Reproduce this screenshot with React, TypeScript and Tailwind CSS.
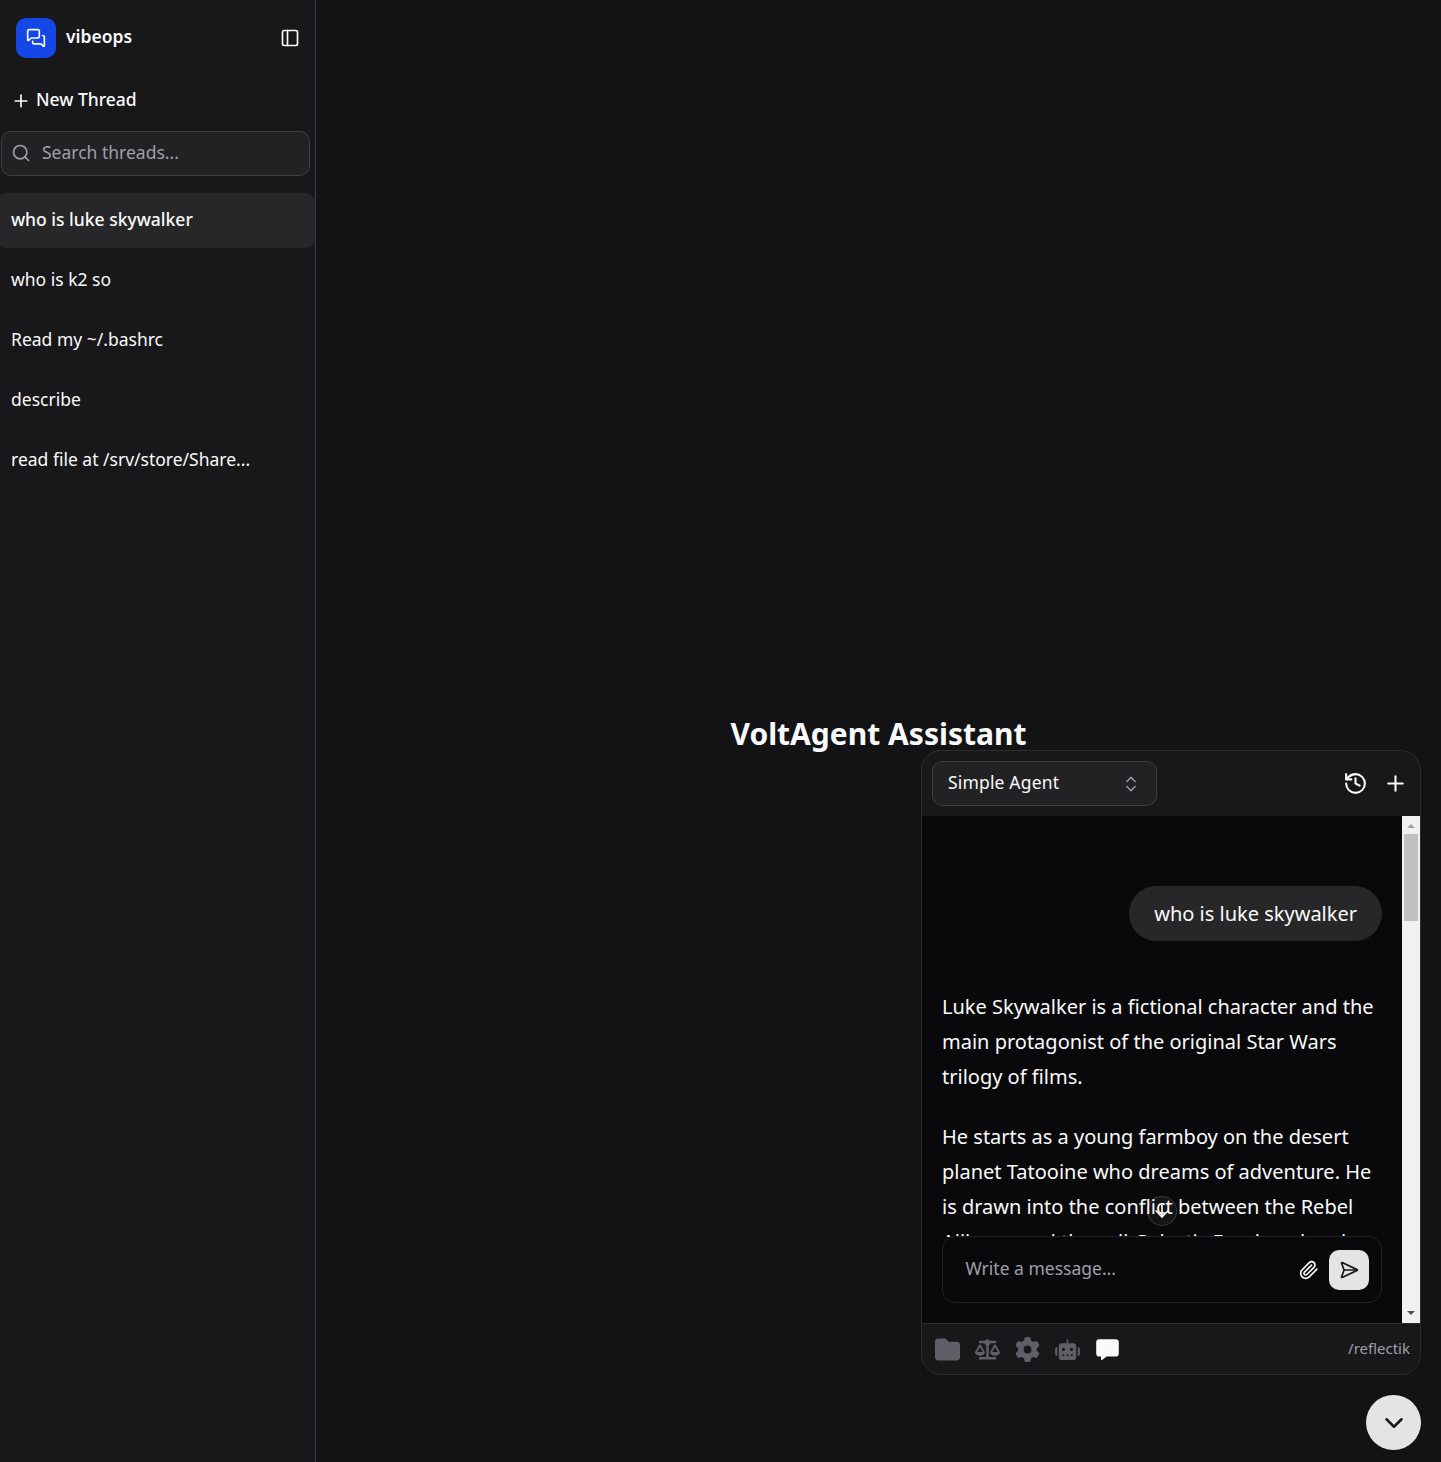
import { MessagesSquare, PanelLeft, Plus, Search, ChevronsUpDown, History, SendHorizontal, ChevronDown, ArrowDown } from 'lucide-react';
import { FaFolder, FaScaleBalanced, FaGear } from 'react-icons/fa6';

const threads = ['who is luke skywalker', 'who is k2 so', 'Read my ~/.bashrc', 'describe', 'read file at /srv/store/Share...'];

function Paperclip() {
  return (
    <svg width="20" height="20" viewBox="0 0 24 24" fill="none" stroke="currentColor" strokeWidth="2" strokeLinecap="round" strokeLinejoin="round">
      <path d="m21.44 11.05-9.19 9.19a6 6 0 0 1-8.49-8.49l8.57-8.57A4 4 0 1 1 18 8.84l-8.59 8.57a2 2 0 0 1-2.83-2.83l8.49-8.48" />
    </svg>
  );
}

function Robot() {
  return (
    <svg width="25" height="25" viewBox="0 0 25 25" fill="currentColor">
      <rect x="11.7" y="2.3" width="1.6" height="6" rx="0.8" />
      <path fillRule="evenodd" d="M6.9 6.2H18.1A3.1 3.1 0 0 1 21.2 9.300V19.9A3.1 3.1 0 0 1 18.1 23H6.9A3.1 3.1 0 0 1 3.8 19.9V9.300A3.1 3.1 0 0 1 6.900 6.2ZM8.500 10.700a1.600 1.600 0 1 0 0 3.200a1.600 1.600 0 1 0 0-3.200ZM16.500 10.700a1.600 1.600 0 1 0 0 3.200a1.600 1.600 0 1 0 0-3.200ZM7.300 17.500V19H9.300V17.500ZM11.500 17.500V19H13.500V17.500ZM15.700 17.500V19H17.700V17.500Z" />
      <path d="M2.3 10V19A2.300 2.300 0 0 1 .1 16.700V12.300A2.300 2.300 0 0 1 2.300 10ZM22.700 10V19A2.300 2.300 0 0 0 24.900 16.700V12.300A2.300 2.300 0 0 0 22.700 10Z" />
    </svg>
  );
}

function ChatBubble() {
  return (
    <svg width="25" height="25" viewBox="0 0 25 25" fill="currentColor" className="text-[#fafafa]">
      <path d="M4.3 2.3H20.7A3.1 3.1 0 0 1 23.8 5.4V16.4A3.1 3.1 0 0 1 20.7 19.5H11.6L7 23.1Q6 23.4 6 22.5V19.5H4.3A3.1 3.1 0 0 1 1.2 16.4V5.4A3.1 3.1 0 0 1 4.3 2.3Z" />
    </svg>
  );
}

function Sidebar() {
  return (
    <aside className="flex h-full w-[316px] shrink-0 flex-col border-r border-[#3f3f43] bg-[#18181b]">
      <header className="flex h-[75px] items-center pr-[15px] pl-4 pt-px">
        <div className="flex size-10 items-center justify-center rounded-[10px] bg-[#1447e6]">
          <MessagesSquare size={20} />
        </div>
        <span className="ml-2.5 -mt-1 text-[17.5px] font-semibold">vibeops</span>
        <PanelLeft size={20} className="ml-auto" />
      </header>
      <button className="flex h-[50px] items-center gap-[5px] pl-[11px] text-[17.5px] font-medium">
        <Plus size={20} className="mt-0.5" />
        <span className="-mt-0.5">New Thread</span>
      </button>
      <div className="mt-[6px] mr-[5px] ml-px flex h-[45px] items-center gap-[11px] rounded-[10px] border border-[#3f3f43] bg-[#222225] pl-[9px] text-[#9f9fa9]">
        <Search size={20} className="-mt-px" />
        <span className="-mt-[3px] text-[17.5px]">Search threads...</span>
      </div>
      <nav className="mt-[17px] flex flex-col gap-[5px]">
        {threads.map((t, i) => (
          <div key={t} className={i === 0 ? '-ml-1 flex h-[55px] items-center rounded-[10px] bg-[#27272a] pb-[2px] pl-[15px] text-[17.5px] font-medium' : 'flex h-[55px] items-center pb-[2px] pl-[11px] text-[17.5px]'}>
            {t}
          </div>
        ))}
      </nav>
    </aside>
  );
}

function ChatPanel() {
  return (
    <section className="absolute top-[750px] left-[921px] flex h-[625px] w-[500px] flex-col overflow-hidden rounded-[20px] border border-[#2c2c2f] bg-[#18181b]">
      <header className="flex h-[65px] shrink-0 items-center px-2.5">
        <div className="flex h-[45px] w-[225px] items-center justify-between rounded-[10px] border border-[#3f3f43] bg-[#222225] pr-[15px] pl-[15px] text-[17.5px]">
          <span className="-mt-[3px] tracking-[0.17px]">Simple Agent</span>
          <ChevronsUpDown size={20} className="text-[#8f8f96]" />
        </div>
        <History size={25} className="ml-auto" />
        <Plus size={25} className="ml-[15px] mr-0.5" />
      </header>
      <div className="flex min-h-0 flex-1 bg-[#09090b]">
        <div className="relative flex min-w-0 flex-1 flex-col">
          <div className="h-[421px] overflow-hidden pl-5 text-[20px] leading-[35px]">
            <div className="mt-[70px] mr-5 flex justify-end">
              <div className="h-[55px] rounded-full bg-[#27272a] px-[25px] pt-[10px]">who is luke skywalker</div>
            </div>
            <p className="mt-[48px] whitespace-nowrap">Luke Skywalker is a fictional character and the<br />main protagonist of the original Star Wars<br />trilogy of films.</p>
            <p className="mt-[25px] whitespace-nowrap">He starts as a young farmboy on the desert<br />planet Tatooine who dreams of adventure. He<br />is drawn into the conflict between the Rebel<br />Alliance and the evil Galactic Empire when he</p>
          </div>
          <div className="absolute top-[380px] left-[225px] flex size-[30px] items-center justify-center rounded-full border border-white/15 bg-white/5">
            <ArrowDown size={20} />
          </div>
          <div className="absolute top-[420px] left-5 flex h-[67px] w-[440px] items-center rounded-[13px] border border-[#222225] bg-[#09090b] pr-3 pl-[22.5px]">
            <span className="-mt-[2px] text-[17.5px] text-[#9f9fa9]">Write a message...</span>
            <span className="ml-auto"><Paperclip /></span>
            <div className="ml-2.5 flex size-10 items-center justify-center rounded-[10px] bg-[#e4e4e7] text-[#18181b]">
              <SendHorizontal size={20} />
            </div>
          </div>
        </div>
        <div className="flex w-[18px] flex-col items-center justify-between bg-[#f1f1f1]">
          <div className="flex flex-col items-center">
            <svg width="18" height="18" viewBox="0 0 18 18" fill="#a3a3a3"><path d="M9 8 13 12H5Z" /></svg>
            <div className="h-[87px] w-[14px] bg-[#c1c1c1]" />
          </div>
          <svg width="18" height="18" viewBox="0 0 18 18" fill="#505050"><path d="M5 6H13L9 10Z" /></svg>
        </div>
      </div>
      <footer className="flex h-[51px] shrink-0 items-center gap-[15px] border-t border-[#2c2c2f] pr-2.5 pl-[13px] text-[#5f5f68]">
        <FaFolder size={25} />
        <FaScaleBalanced size={25} />
        <FaGear size={25} />
        <Robot />
        <ChatBubble />
        <span className="ml-auto -mt-0.5 text-[15px] text-[#9f9fa9]">/reflectik</span>
      </footer>
    </section>
  );
}

export default function App() {
  return (
    <div className="relative flex h-[1462px] w-[1441px] overflow-hidden bg-[#131315] font-['Noto_Sans',sans-serif] text-[#fafafa]">
      <Sidebar />
      <main className="flex flex-1 items-center justify-center">
        <h1 className="mt-[6px] text-[30px] leading-[40px] font-bold">VoltAgent Assistant</h1>
      </main>
      <ChatPanel />
      <button className="absolute top-[1395px] left-[1366px] flex size-[55px] items-center justify-center rounded-full bg-[#e4e4e7] text-[#18181b]">
        <ChevronDown size={30} />
      </button>
    </div>
  );
}
